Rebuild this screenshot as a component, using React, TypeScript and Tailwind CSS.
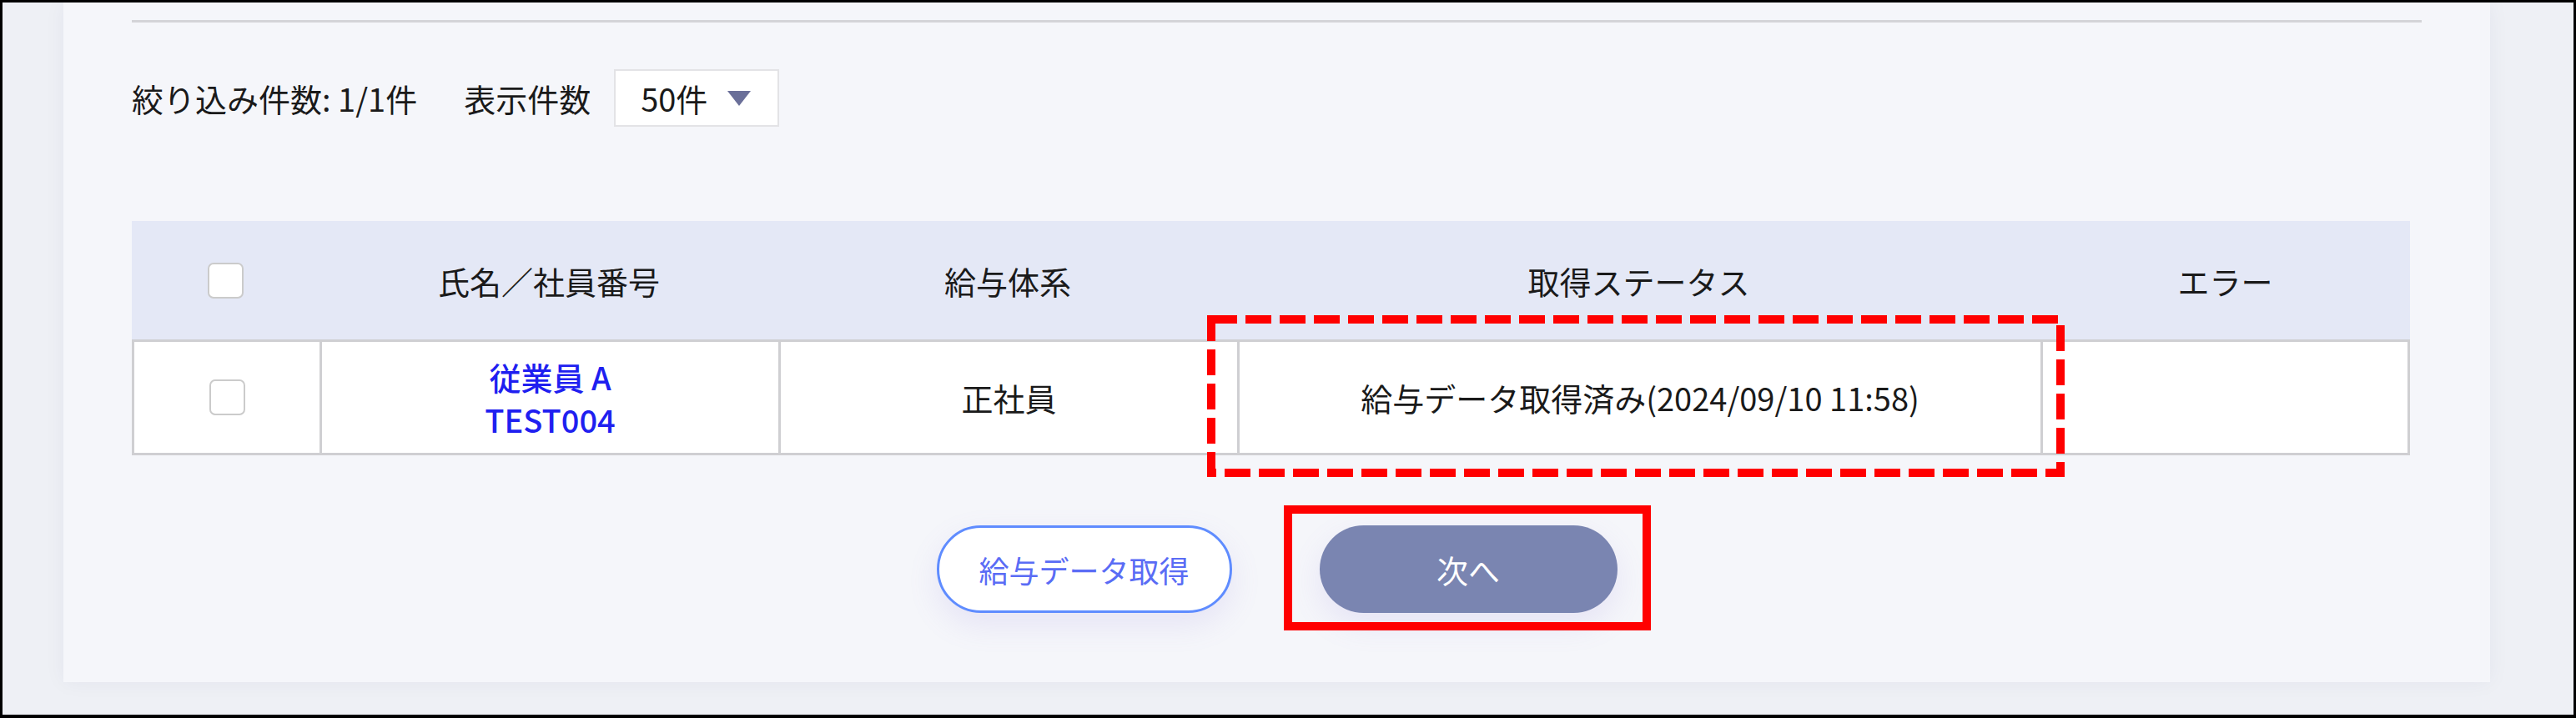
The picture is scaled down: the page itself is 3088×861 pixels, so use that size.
import { useState } from "react"

interface EmployeeRow {
  name: string
  code: string
  salaryType: string
  status: string
  error: string
}

const rows: EmployeeRow[] = [
  {
    name: "従業員 A",
    code: "TEST004",
    salaryType: "正社員",
    status: "給与データ取得済み(2024/09/10 11:58)",
    error: "",
  },
]

function CheckBox({ checked, onChange }: { checked: boolean; onChange: () => void }) {
  return (
    <button
      type="button"
      onClick={onChange}
      className={`w-[43px] h-[43px] rounded-[7px] border-2 border-[#cbcbcb] ${checked ? "bg-[#7a85b1]" : "bg-white"}`}
    />
  )
}

function PageSizeSelect() {
  return (
    <div className="ml-[28px] w-[198px] h-[69px] bg-white border-2 border-[#e3e3e6] flex items-center justify-between pl-[30px] pr-[32px]">
      <span>50件</span>
      <svg width="28" height="18" viewBox="0 0 28 18">
        <polygon points="0,0 28,0 14,18" fill="#6a6f99" />
      </svg>
    </div>
  )
}

export default function App() {
  const [selected, setSelected] = useState<boolean[]>(rows.map(() => false))
  const allSelected = selected.every(Boolean)

  const toggleAll = () => setSelected(selected.map(() => !allSelected))
  const toggleRow = (i: number) => setSelected(selected.map((s, idx) => (idx === i ? !s : s)))

  return (
    <div className="w-[3088px] h-[861px] border-[3px] border-b-4 border-black bg-[#eef0f5] pl-[73px] pr-[100px] pb-[39px] font-['Noto_Sans_CJK_JP','Noto_Sans',sans-serif] text-[#1a1a1a]">
      <div className="h-full bg-[#f5f6fa] px-[82px] pt-[21px] flex flex-col shadow-[0_0_24px_rgba(40,40,90,0.05)]">
        <div className="h-[3px] bg-[#d4d4d8]" />

        {/* filters */}
        <div className="mt-[56px] h-[69px] flex items-center text-[38px] leading-none">
          <span>絞り込み件数: 1/1件</span>
          <span className="ml-[56px]">表示件数</span>
          <PageSizeSelect />
        </div>

        {/* table */}
        <div className="relative mt-[113px] mr-[14px] text-[38px]">
          <div className="grid grid-cols-[225px_550px_550px_963px_443px] h-[142px] bg-[#e4e8f6] items-center text-center">
            <div className="flex justify-center">
              <CheckBox checked={allSelected} onChange={toggleAll} />
            </div>
            <div>氏名／社員番号</div>
            <div>給与体系</div>
            <div>取得ステータス</div>
            <div>エラー</div>
          </div>
          {rows.map((row, i) => (
            <div
              key={row.code}
              className="grid grid-cols-[222px_550px_550px_963px_440px] h-[139px] bg-white border-[3px] border-[#cfcfd2] text-center"
            >
              <div className="flex items-center justify-center">
                <CheckBox checked={selected[i]} onChange={() => toggleRow(i)} />
              </div>
              <div className="border-l-[3px] border-[#cfcfd2] flex flex-col items-center justify-center leading-[51px] text-[#1f1ff0] font-medium">
                <span>{row.name}</span>
                <span>{row.code}</span>
              </div>
              <div className="border-l-[3px] border-[#cfcfd2] flex items-center justify-center">{row.salaryType}</div>
              <div className="border-l-[3px] border-[#cfcfd2] flex items-center justify-center">{row.status}</div>
              <div className="border-l-[3px] border-[#cfcfd2] flex items-center justify-center">{row.error}</div>
            </div>
          ))}

          {/* annotation: dashed box */}
          <svg
            className="absolute left-[1289px] top-[113px] pointer-events-none"
            width="1028"
            height="194"
            viewBox="0 0 1028 194"
          >
            <rect x="5" y="5" width="1018" height="184" fill="none" stroke="#ff0000" strokeWidth="10" strokeDasharray="31 10" />
          </svg>
        </div>

        {/* actions */}
        <div className="mt-[84px] flex justify-center gap-[105px]">
          <button
            type="button"
            className="w-[354px] h-[105px] rounded-full border-[3px] border-[#5f8cff] bg-white text-[#5a6cf5] text-[36px] shadow-[0_14px_36px_rgba(140,120,220,0.14)]"
          >
            給与データ取得
          </button>
          <div className="relative">
            <button
              type="button"
              className="w-[357px] h-[105px] rounded-full bg-[#7a85b1] text-white text-[38px] shadow-[0_14px_36px_rgba(140,120,220,0.14)]"
            >
              次へ
            </button>
            <div className="absolute -left-[43px] -top-[24px] w-[440px] h-[150px] border-[10px] border-[#ff0000] pointer-events-none" />
          </div>
        </div>
      </div>
    </div>
  )
}
